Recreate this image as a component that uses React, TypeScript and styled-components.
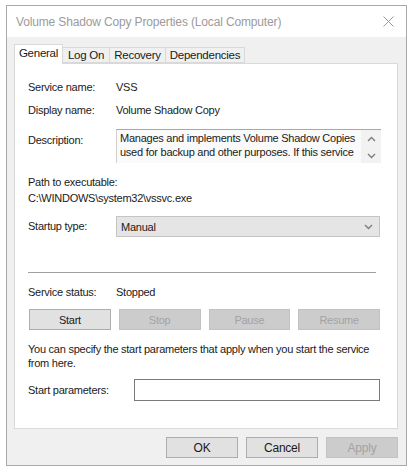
import styled, { createGlobalStyle } from 'styled-components';

const GlobalStyle = createGlobalStyle`
  body {
    margin: 0;
    background: #ffffff;
    font-family: "Liberation Sans", Arial, sans-serif;
    font-size: 11px;
    letter-spacing: -0.25px;
    color: #1a1a1a;
  }
`

const tabs = [
  { label: 'General', width: 49 },
  { label: 'Log On', width: 48 },
  { label: 'Recovery', width: 57 },
  { label: 'Dependencies', width: 80 },
];
const serviceButtons = [
  { label: 'Start', enabled: true },
  { label: 'Stop', enabled: false },
  { label: 'Pause', enabled: false },
  { label: 'Resume', enabled: false },
];

const Chevron = ({ up }: { up?: boolean }) => (
  <svg width="9" height="6" viewBox="0 0 9 6">
    <path d={up ? 'M1 5 L4.5 1.5 L8 5' : 'M1 1 L4.5 4.5 L8 1'} fill="none" stroke="#7a7a7a" strokeWidth="1.3" />
  </svg>
)

export default function App() {
  return (
    <>
      <GlobalStyle />
      <Window>
        <TitleBar>
          <Title>Volume Shadow Copy Properties (Local Computer)</Title>
          <CloseIcon width="11" height="11" viewBox="0 0 11 11">
            <path d="M0.5 0.5 L10.5 10.5 M10.5 0.5 L0.5 10.5" stroke="#9a9a9a" strokeWidth="1" />
          </CloseIcon>
        </TitleBar>
        <Body>
          <TabStrip>
            {tabs.map((t, i) => (
              <Tab key={t.label} active={i === 0} width={t.width}>{t.label}</Tab>
            ))}
          </TabStrip>
          <Panel>
            <InfoRow>
              <Label>Service name:</Label>
              <Value>VSS</Value>
            </InfoRow>
            <InfoRow gap={8}>
              <Label>Display name:</Label>
              <Value>Volume Shadow Copy</Value>
            </InfoRow>
            <InfoRow gap={11}>
              <Label offset={4}>Description:</Label>
              <DescriptionBox>
                <DescriptionText>
                  Manages and implements Volume Shadow Copies used for backup and other purposes. If this service
                </DescriptionText>
                <ScrollArrows>
                  <Chevron up />
                  <Chevron />
                </ScrollArrows>
              </DescriptionBox>
            </InfoRow>
            <Line gap={12}>Path to executable:</Line>
            <Line>C:\WINDOWS\system32\vssvc.exe</Line>
            <InfoRow gap={10}>
              <Label offset={3}>Startup type:</Label>
              <Combo>
                <span>Manual</span>
                <Chevron />
              </Combo>
            </InfoRow>
            <Separator />
            <InfoRow gap={12}>
              <Label>Service status:</Label>
              <Value>Stopped</Value>
            </InfoRow>
            <ServiceButtons>
              {serviceButtons.map(b => (
                <Button key={b.label} disabled={!b.enabled}>{b.label}</Button>
              ))}
            </ServiceButtons>
            <Paragraph>
              You can specify the start parameters that apply when you start the service from here.
            </Paragraph>
            <ParamsRow>
              <Label offset={4}>Start parameters:</Label>
              <TextBox />
            </ParamsRow>
          </Panel>
          <DialogButtons>
            <DialogButton>OK</DialogButton>
            <DialogButton>Cancel</DialogButton>
            <DialogButton disabled>Apply</DialogButton>
          </DialogButtons>
        </Body>
      </Window>
    </>
  )
}

const Window = styled.div`
  box-sizing: border-box;
  width: 401px;
  height: 461px;
  margin: 5px 0 0 6px;
  border: 1px solid #a9a9a9;
  background: #f0f0f0;
  display: flex;
  flex-direction: column;
`

const TitleBar = styled.div`
  height: 31px;
  background: #ffffff;
  display: flex;
  align-items: center;
  justify-content: space-between;
  padding: 0 12px 0 9px;
`

const Title = styled.div`
  font-size: 12px;
  letter-spacing: -0.15px;
  color: #9b9b9b;
`

const CloseIcon = styled.svg`
  display: block;
`

const Body = styled.div`
  padding: 7px 8px 0 7px;
  display: flex;
  flex-direction: column;
`

const TabStrip = styled.div`
  display: flex;
  align-items: flex-end;
  height: 19px;
  position: relative;
  z-index: 1;
`

const Tab = styled.div<{ active?: boolean; width: number }>`
  box-sizing: border-box;
  width: ${p => p.width}px;
  height: ${p => (p.active ? '20px' : '16px')};
  margin-bottom: ${p => (p.active ? '-1px' : '0')};
  padding-top: ${p => (p.active ? '2px' : '1px')};
  text-align: center;
  border: 1px solid #d9d9d9;
  border-bottom: ${p => (p.active ? 'none' : '1px solid #d9d9d9')};
  margin-left: ${p => (p.active ? '0' : '-1px')};
  background: ${p => (p.active ? '#ffffff' : '#f0f0f0')};
  font-size: 11.5px;
  line-height: 13px;
  white-space: nowrap;
`

const Panel = styled.div`
  box-sizing: border-box;
  width: 384px;
  height: 366px;
  background: #ffffff;
  border: 1px solid #d9d9d9;
  padding: 16px 17px 0 13px;
  display: flex;
  flex-direction: column;
`

const InfoRow = styled.div<{ gap?: number }>`
  display: flex;
  align-items: flex-start;
  margin-top: ${p => p.gap ?? 0}px;
`

const Label = styled.div<{ offset?: number }>`
  width: 88px;
  flex-shrink: 0;
  line-height: 15px;
  padding-top: ${p => p.offset ?? 0}px;
`

const Value = styled.div`
  line-height: 15px;
`

const Line = styled.div<{ gap?: number }>`
  line-height: 15px;
  margin-top: ${p => p.gap ?? 1}px;
`

const DescriptionBox = styled.div`
  box-sizing: border-box;
  flex: 1;
  height: 34px;
  margin-right: -1px;
  border-top: 1px solid #a8a8a8;
  border-left: 1px solid #d0d0d0;
  background: #fafafa;
  display: flex;
`

const DescriptionText = styled.div`
  flex: 1;
  padding: 1px 0 0 3px;
  line-height: 14px;
  height: 30px;
  overflow: hidden;
`

const ScrollArrows = styled.div`
  width: 20px;
  background: #f2f2f2;
  display: flex;
  flex-direction: column;
  align-items: center;
  justify-content: space-between;
  padding: 6px 0 4px;
  box-sizing: border-box;
`

const Combo = styled.div`
  box-sizing: border-box;
  flex: 1;
  height: 21px;
  border: 1px solid #c4c4c4;
  background: #e5e5e5;
  display: flex;
  align-items: center;
  justify-content: space-between;
  padding: 0 6px 0 4px;
`

const Separator = styled.div`
  height: 1px;
  background: #a0a0a0;
  margin: 35px 4px 0 0;
`

const ServiceButtons = styled.div`
  display: grid;
  grid-template-columns: repeat(4, 1fr);
  column-gap: 8px;
  margin: 9px 0 0 1px;
`

const Button = styled.div<{ disabled?: boolean }>`
  box-sizing: border-box;
  height: 21px;
  display: flex;
  align-items: center;
  justify-content: center;
  border: 1px solid ${p => (p.disabled ? '#c2c2c2' : '#adadad')};
  background: ${p => (p.disabled ? '#cccccc' : '#e1e1e1')};
  color: ${p => (p.disabled ? '#a3a3a3' : '#1a1a1a')};
`

const Paragraph = styled.div`
  margin-top: 12px;
  line-height: 14px;
  padding-right: 4px;
`

const ParamsRow = styled.div`
  display: flex;
  align-items: flex-start;
  margin-top: 9px;
  & > div:first-child {
    width: 106px;
  }
`

const TextBox = styled.div`
  box-sizing: border-box;
  flex: 1;
  height: 22px;
  border: 1px solid #7a7a7a;
  background: #ffffff;
`

const DialogButtons = styled.div`
  display: flex;
  justify-content: flex-end;
  gap: 8px;
  margin-top: 8px;
`

const DialogButton = styled(Button)`
  width: 72px;
  height: 21px;
  font-size: 12px;
`
